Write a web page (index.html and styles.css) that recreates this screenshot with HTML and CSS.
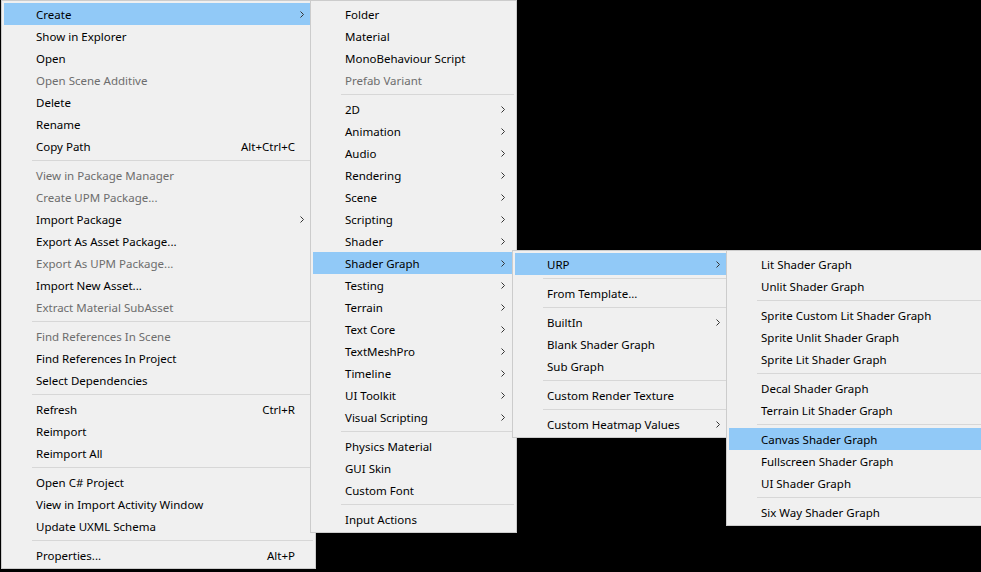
FILE: index.html
```html
<!DOCTYPE html>
<html lang="en">
<head>
  <meta charset="UTF-8" />
  <meta name="viewport" content="width=device-width, initial-scale=1.0" />
  <title>Project - Context Menu</title>
  <link rel="stylesheet" href="styles.css">
</head>
<body>
  <div class="desktop">

    <!-- project window context menu -->
    <div class="menu" id="menu-project">
      <div class="item hover"><span class="label">Create</span><span class="arrow"><svg width="4" height="7" viewBox="0 0 4 7"><path d="M0.5 0.5 L3.5 3.5 L0.5 6.5"/></svg></span></div>
      <div class="item"><span class="label">Show in Explorer</span><span class="arrow"></span></div>
      <div class="item"><span class="label">Open</span><span class="arrow"></span></div>
      <div class="item disabled"><span class="label">Open Scene Additive</span><span class="arrow"></span></div>
      <div class="item"><span class="label">Delete</span><span class="arrow"></span></div>
      <div class="item"><span class="label">Rename</span><span class="arrow"></span></div>
      <div class="item"><span class="label">Copy Path</span><span class="key">Alt+Ctrl+C</span><span class="arrow"></span></div>
      <div class="separator"></div>
      <div class="item disabled"><span class="label">View in Package Manager</span><span class="arrow"></span></div>
      <div class="item disabled"><span class="label">Create UPM Package...</span><span class="arrow"></span></div>
      <div class="item"><span class="label">Import Package</span><span class="arrow"><svg width="4" height="7" viewBox="0 0 4 7"><path d="M0.5 0.5 L3.5 3.5 L0.5 6.5"/></svg></span></div>
      <div class="item"><span class="label">Export As Asset Package...</span><span class="arrow"></span></div>
      <div class="item disabled"><span class="label">Export As UPM Package...</span><span class="arrow"></span></div>
      <div class="item"><span class="label">Import New Asset...</span><span class="arrow"></span></div>
      <div class="item disabled"><span class="label">Extract Material SubAsset</span><span class="arrow"></span></div>
      <div class="separator"></div>
      <div class="item disabled"><span class="label">Find References In Scene</span><span class="arrow"></span></div>
      <div class="item"><span class="label">Find References In Project</span><span class="arrow"></span></div>
      <div class="item"><span class="label">Select Dependencies</span><span class="arrow"></span></div>
      <div class="separator"></div>
      <div class="item"><span class="label">Refresh</span><span class="key">Ctrl+R</span><span class="arrow"></span></div>
      <div class="item"><span class="label">Reimport</span><span class="arrow"></span></div>
      <div class="item"><span class="label">Reimport All</span><span class="arrow"></span></div>
      <div class="separator"></div>
      <div class="item"><span class="label">Open C# Project</span><span class="arrow"></span></div>
      <div class="item"><span class="label">View in Import Activity Window</span><span class="arrow"></span></div>
      <div class="item"><span class="label">Update UXML Schema</span><span class="arrow"></span></div>
      <div class="separator"></div>
      <div class="item"><span class="label">Properties...</span><span class="key">Alt+P</span><span class="arrow"></span></div>
    </div>

    <!-- Create submenu -->
    <div class="menu" id="menu-create">
      <div class="item"><span class="label">Folder</span><span class="arrow"></span></div>
      <div class="item"><span class="label">Material</span><span class="arrow"></span></div>
      <div class="item"><span class="label">MonoBehaviour Script</span><span class="arrow"></span></div>
      <div class="item disabled"><span class="label">Prefab Variant</span><span class="arrow"></span></div>
      <div class="separator"></div>
      <div class="item"><span class="label">2D</span><span class="arrow"><svg width="4" height="7" viewBox="0 0 4 7"><path d="M0.5 0.5 L3.5 3.5 L0.5 6.5"/></svg></span></div>
      <div class="item"><span class="label">Animation</span><span class="arrow"><svg width="4" height="7" viewBox="0 0 4 7"><path d="M0.5 0.5 L3.5 3.5 L0.5 6.5"/></svg></span></div>
      <div class="item"><span class="label">Audio</span><span class="arrow"><svg width="4" height="7" viewBox="0 0 4 7"><path d="M0.5 0.5 L3.5 3.5 L0.5 6.5"/></svg></span></div>
      <div class="item"><span class="label">Rendering</span><span class="arrow"><svg width="4" height="7" viewBox="0 0 4 7"><path d="M0.5 0.5 L3.5 3.5 L0.5 6.5"/></svg></span></div>
      <div class="item"><span class="label">Scene</span><span class="arrow"><svg width="4" height="7" viewBox="0 0 4 7"><path d="M0.5 0.5 L3.5 3.5 L0.5 6.5"/></svg></span></div>
      <div class="item"><span class="label">Scripting</span><span class="arrow"><svg width="4" height="7" viewBox="0 0 4 7"><path d="M0.5 0.5 L3.5 3.5 L0.5 6.5"/></svg></span></div>
      <div class="item"><span class="label">Shader</span><span class="arrow"><svg width="4" height="7" viewBox="0 0 4 7"><path d="M0.5 0.5 L3.5 3.5 L0.5 6.5"/></svg></span></div>
      <div class="item hover"><span class="label">Shader Graph</span><span class="arrow"><svg width="4" height="7" viewBox="0 0 4 7"><path d="M0.5 0.5 L3.5 3.5 L0.5 6.5"/></svg></span></div>
      <div class="item"><span class="label">Testing</span><span class="arrow"><svg width="4" height="7" viewBox="0 0 4 7"><path d="M0.5 0.5 L3.5 3.5 L0.5 6.5"/></svg></span></div>
      <div class="item"><span class="label">Terrain</span><span class="arrow"><svg width="4" height="7" viewBox="0 0 4 7"><path d="M0.5 0.5 L3.5 3.5 L0.5 6.5"/></svg></span></div>
      <div class="item"><span class="label">Text Core</span><span class="arrow"><svg width="4" height="7" viewBox="0 0 4 7"><path d="M0.5 0.5 L3.5 3.5 L0.5 6.5"/></svg></span></div>
      <div class="item"><span class="label">TextMeshPro</span><span class="arrow"><svg width="4" height="7" viewBox="0 0 4 7"><path d="M0.5 0.5 L3.5 3.5 L0.5 6.5"/></svg></span></div>
      <div class="item"><span class="label">Timeline</span><span class="arrow"><svg width="4" height="7" viewBox="0 0 4 7"><path d="M0.5 0.5 L3.5 3.5 L0.5 6.5"/></svg></span></div>
      <div class="item"><span class="label">UI Toolkit</span><span class="arrow"><svg width="4" height="7" viewBox="0 0 4 7"><path d="M0.5 0.5 L3.5 3.5 L0.5 6.5"/></svg></span></div>
      <div class="item"><span class="label">Visual Scripting</span><span class="arrow"><svg width="4" height="7" viewBox="0 0 4 7"><path d="M0.5 0.5 L3.5 3.5 L0.5 6.5"/></svg></span></div>
      <div class="separator"></div>
      <div class="item"><span class="label">Physics Material</span><span class="arrow"></span></div>
      <div class="item"><span class="label">GUI Skin</span><span class="arrow"></span></div>
      <div class="item"><span class="label">Custom Font</span><span class="arrow"></span></div>
      <div class="separator"></div>
      <div class="item"><span class="label">Input Actions</span><span class="arrow"></span></div>
    </div>

    <!-- Shader Graph submenu -->
    <div class="menu" id="menu-shadergraph">
      <div class="item hover"><span class="label">URP</span><span class="arrow"><svg width="4" height="7" viewBox="0 0 4 7"><path d="M0.5 0.5 L3.5 3.5 L0.5 6.5"/></svg></span></div>
      <div class="separator"></div>
      <div class="item"><span class="label">From Template...</span><span class="arrow"></span></div>
      <div class="separator"></div>
      <div class="item"><span class="label">BuiltIn</span><span class="arrow"><svg width="4" height="7" viewBox="0 0 4 7"><path d="M0.5 0.5 L3.5 3.5 L0.5 6.5"/></svg></span></div>
      <div class="item"><span class="label">Blank Shader Graph</span><span class="arrow"></span></div>
      <div class="item"><span class="label">Sub Graph</span><span class="arrow"></span></div>
      <div class="separator"></div>
      <div class="item"><span class="label">Custom Render Texture</span><span class="arrow"></span></div>
      <div class="separator"></div>
      <div class="item"><span class="label">Custom Heatmap Values</span><span class="arrow"><svg width="4" height="7" viewBox="0 0 4 7"><path d="M0.5 0.5 L3.5 3.5 L0.5 6.5"/></svg></span></div>
    </div>

    <!-- URP submenu -->
    <div class="menu" id="menu-urp">
      <div class="item"><span class="label">Lit Shader Graph</span><span class="arrow"></span></div>
      <div class="item"><span class="label">Unlit Shader Graph</span><span class="arrow"></span></div>
      <div class="separator"></div>
      <div class="item"><span class="label">Sprite Custom Lit Shader Graph</span><span class="arrow"></span></div>
      <div class="item"><span class="label">Sprite Unlit Shader Graph</span><span class="arrow"></span></div>
      <div class="item"><span class="label">Sprite Lit Shader Graph</span><span class="arrow"></span></div>
      <div class="separator"></div>
      <div class="item"><span class="label">Decal Shader Graph</span><span class="arrow"></span></div>
      <div class="item"><span class="label">Terrain Lit Shader Graph</span><span class="arrow"></span></div>
      <div class="separator"></div>
      <div class="item hover"><span class="label">Canvas Shader Graph</span><span class="arrow"></span></div>
      <div class="item"><span class="label">Fullscreen Shader Graph</span><span class="arrow"></span></div>
      <div class="item"><span class="label">UI Shader Graph</span><span class="arrow"></span></div>
      <div class="separator"></div>
      <div class="item"><span class="label">Six Way Shader Graph</span><span class="arrow"></span></div>
    </div>

  </div>
</body>
</html>
```

FILE: styles.css
```css
html, body {
  margin: 0;
  padding: 0;
  background-color: black;
  height: 100%;
  overflow: hidden;
}
.desktop {
  position: relative;
  width: 981px;
  height: 572px;
  font-family: "Noto Sans", sans-serif;
  font-size: 11.5px;
  color: black;
}

/* popup windows, each placed where it opened */
.menu {
  position: absolute;
  box-sizing: border-box;
  background-color: #f0f0f0;
  border: 1px solid #cccccc;
  padding: 2px;
}
#menu-project {
  left: 1px;
  top: 0;
  width: 315px;
}
#menu-create {
  left: 310px;
  top: 0;
  width: 207px;
}
#menu-shadergraph {
  left: 512px;
  top: 250px;
  width: 220px;
}
#menu-urp {
  left: 726px;
  top: 250px;
  width: 262px;
}

.item {
  display: flex;
  align-items: center;
  height: 22px;
  padding-left: 32px;
  white-space: nowrap;
}
.item.hover {
  background-color: #91c9f7;
}
.item.disabled {
  color: #6d6d6d;
}
.label {
  flex: 1;
}
.arrow {
  width: 18px;
  height: 22px;
  display: flex;
  align-items: center;
  justify-content: flex-end;
  padding-right: 9px;
  box-sizing: border-box;
}
.arrow svg {
  display: block;
  fill: none;
  stroke: #333;
  stroke-width: 1;
}
.separator {
  height: 1px;
  margin: 3px 0 3px 28px;
  background-color: #d7d7d7;
}
```
